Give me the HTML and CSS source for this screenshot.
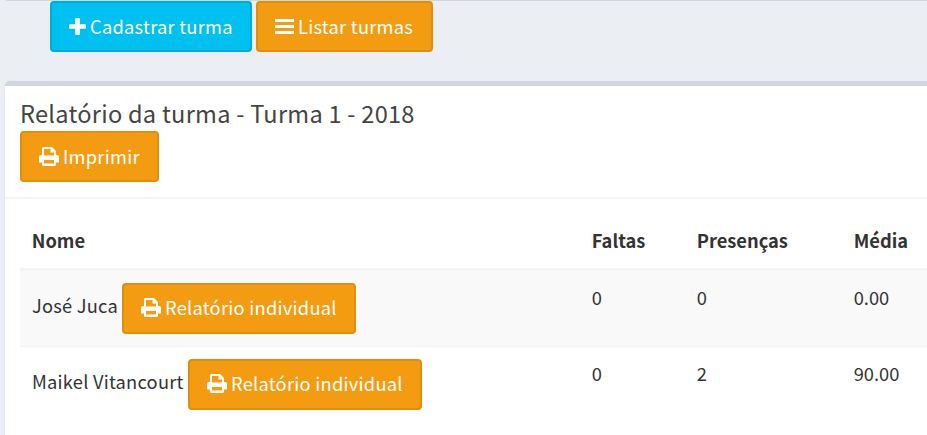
FILE: index.html
```html
<!DOCTYPE html>
<html lang="pt-BR">
<head>
<meta charset="utf-8">
<title>Relatório da turma</title>
<link rel="stylesheet" href="styles.css">
</head>
<body>
<svg class="defs" aria-hidden="true">
  <symbol id="print" viewBox="0 0 20 19"><path fill-rule="evenodd" d="M4.500 0H13L17 4V8H18Q20 8 20 10V15.500H17V17.500Q17 19 15.500 19H4.500Q3 19 3 17.500V15.500H0V10Q0 8 2 8H3V1.500Q3 0 4.500 0ZM5 2V8.500H15V5.500H11.500V2ZM5 13V16.500H15V13Z"/></symbol>
</svg>
<div class="toolbar">
  <a class="btn btn-info"><svg class="icon-plus" viewBox="192 128 1408 1408"><path d="M1600 736v192q0 40-28 68t-68 28h-416v416q0 40-28 68t-68 28h-192q-40 0-68-28t-28-68v-416h-416q-40 0-68-28t-28-68v-192q0-40 28-68t68-28h416v-416q0-40 28-68t68-28h192q40 0 68 28t28 68v416h416q40 0 68 28t28 68z"/></svg><span>Cadastrar turma</span></a>
  <a class="btn btn-list"><svg class="icon-bars" viewBox="0 0 19 15"><path d="M0 0h19v3H0zM0 6h19v3H0zM0 12h19v3H0z"/></svg><span>Listar turmas</span></a>
</div>
<div class="box">
  <div class="box-header">
    <h3>Relatório da turma - Turma 1 - 2018</h3>
    <a class="btn btn-print"><svg class="icon-print"><use href="#print"/></svg><span>Imprimir</span></a>
  </div>
  <div class="table">
    <div class="row head"><div>Nome</div><div>Faltas</div><div>Presenças</div><div>Média</div></div>
    <div class="row striped">
      <div class="student"><span class="name name-short">José Juca</span><a class="btn btn-report"><svg class="icon-print"><use href="#print"/></svg><span>Relatório individual</span></a></div>
      <div>0</div><div>0</div><div>0.00</div>
    </div>
    <div class="row">
      <div class="student"><span class="name name-long">Maikel Vitancourt</span><a class="btn btn-report"><svg class="icon-print"><use href="#print"/></svg><span>Relatório individual</span></a></div>
      <div>0</div><div>2</div><div>90.00</div>
    </div>
  </div>
</div>
</body>
</html>
```
FILE: styles.css
```css
* { box-sizing: border-box; }
body {
  margin: 0;
  height: 435px;
  overflow: hidden;
  padding-left: 5px;
  background: #ebeef3;
  color: #333;
  font: 18.3px/30px "Noto Sans CJK JP", "Noto Sans", sans-serif;
}
.defs { position: absolute; width: 0; height: 0; }
.toolbar {
  display: flex;
  gap: 4px;
  height: 81px;
  padding-left: 45px;
  border-top: 1px solid #d2d6de;
  border-top-left-radius: 2px;
}
.btn {
  display: flex;
  align-items: center;
  gap: 4px;
  height: 51px;
  padding: 0 0 0 17px;
  border: 2px solid #e08e0b;
  border-radius: 4px;
  background: #f39c12;
  color: #fff;
  letter-spacing: .25px;
  white-space: nowrap;
}
.btn svg { flex: none; fill: #fff; }
.btn span { padding-bottom: 2px; }
.btn-info { width: 202px; background: #00c0ef; border-color: #00acd6; }
.btn-list { width: 177px; }
.btn-print { width: 139px; }
.btn-report { width: 234px; }
.btn-report span { padding-bottom: 4px; }
.btn-report svg { margin-bottom: 2px; }
.icon-plus { width: 17px; height: 17px; }
.icon-bars { width: 19px; height: 15px; }
.icon-print { width: 20px; height: 19px; }
.box {
  height: 354px;
  border-top: 5px solid #d2d6de;
  border-top-left-radius: 5px;
  background: #fff;
  box-shadow: 0 1px 2px rgba(0, 0, 0, .1);
}
.box-header {
  height: 113px;
  padding: 12px 15px 0;
  border-bottom: 2px solid #f4f4f4;
}
h3 {
  margin: 0 0 3px;
  color: #444;
  font-size: 23.6px;
  font-weight: 400;
  line-height: 30px;
  letter-spacing: .25px;
}
.table { margin: 15px 0 0 15px; }
.row {
  display: grid;
  grid-template-columns: 560px 105px 157px 85px;
  height: 76px;
  padding-top: 11px;
}
.row > div { padding-left: 11.7px; }
.head {
  height: 57px;
  border-bottom: 3px solid #f4f4f4;
  font-weight: 700;
}
.striped { background: #f9f9f9; border-bottom: 1px solid #f4f4f4; }
.row > .student { display: flex; gap: 4px; padding: 1px 0 0 12px; }
.name { padding-top: 7px; letter-spacing: .23px; white-space: nowrap; }
.name-short { width: 86px; }
.name-long { width: 152px; }
```
